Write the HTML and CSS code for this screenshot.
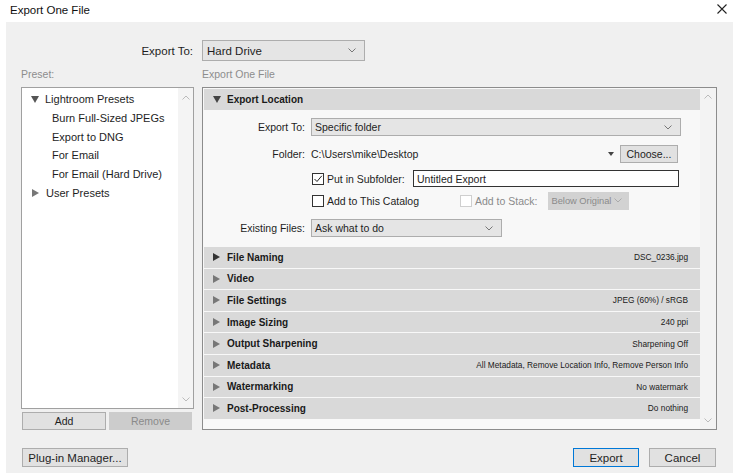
FILE: index.html
```html
<!DOCTYPE html>
<html>
<head>
<meta charset="utf-8">
<link rel="stylesheet" href="styles.css">
</head>
<body>
<div class="window">
  <div class="titlebar">
    <span class="title">Export One File</span>
    <svg class="close" width="10" height="10" viewBox="0 0 10 10"><path d="M0.5 0.5 L9.5 9.5 M9.5 0.5 L0.5 9.5" stroke="#222" stroke-width="1.1" fill="none"/></svg>
  </div>
  <div class="dialog">
    <div class="topline">
      <span class="toplabel">Export To:</span>
      <div class="select topselect"><span>Hard Drive</span><svg class="chev" width="8" height="5" viewBox="0 0 8 5"><path d="M0.5 0.5 L4 4 L7.5 0.5" stroke="#777" fill="none"/></svg></div>
    </div>
    <div class="caps">
      <span class="cap cap-left">Preset:</span>
      <span class="cap">Export One File</span>
    </div>
    <div class="columns">
      <div class="leftcol">
        <div class="list">
          <div class="tree">
            <div class="node"><span class="tri-d"></span>Lightroom Presets</div>
            <div class="leaf">Burn Full-Sized JPEGs</div>
            <div class="leaf">Export to DNG</div>
            <div class="leaf">For Email</div>
            <div class="leaf">For Email (Hard Drive)</div>
            <div class="node"><span class="tri-r"></span>User Presets</div>
          </div>
          <div class="vscroll">
            <svg width="8" height="5" viewBox="0 0 8 5"><path d="M0.5 4.5 L4 1 L7.5 4.5" stroke="#bbb" fill="none"/></svg>
            <svg width="8" height="5" viewBox="0 0 8 5"><path d="M0.5 0.5 L4 4 L7.5 0.5" stroke="#bbb" fill="none"/></svg>
          </div>
        </div>
        <div class="listbtns">
          <div class="btn small">Add</div>
          <div class="btn small disabled">Remove</div>
        </div>
      </div>
      <div class="panel">
        <div class="panelcontent">
          <div class="sechead open"><span class="tri-d dark"></span>Export Location</div>
          <div class="form">
            <div class="frow r1">
              <span class="flabel">Export To:</span>
              <div class="select sel-wide"><span>Specific folder</span><svg class="chev" width="8" height="5" viewBox="0 0 8 5"><path d="M0.5 0.5 L4 4 L7.5 0.5" stroke="#777" fill="none"/></svg></div>
            </div>
            <div class="frow r2">
              <span class="flabel">Folder:</span>
              <span class="path">C:\Users\mike\Desktop</span>
              <span class="tri-small"></span>
              <div class="btn choose">Choose...</div>
            </div>
            <div class="frow r3">
              <span class="flabel"></span>
              <div class="check checked"><svg width="10" height="10" viewBox="0 0 10 10"><path d="M1.5 5 L4 7.5 L8.8 1.8" stroke="#222" stroke-width="1" fill="none"/></svg></div>
              <span class="clabel sub">Put in Subfolder:</span>
              <div class="textbox">Untitled Export</div>
            </div>
            <div class="frow r4">
              <span class="flabel"></span>
              <div class="check"></div>
              <span class="clabel catalog">Add to This Catalog</span>
              <div class="check disabled"></div>
              <span class="clabel stacklbl">Add to Stack:</span>
              <div class="select sel-dis"><span>Below Original</span><svg class="chev" width="8" height="5" viewBox="0 0 8 5"><path d="M0.5 0.5 L4 4 L7.5 0.5" stroke="#aaa" fill="none"/></svg></div>
            </div>
            <div class="frow r5">
              <span class="flabel">Existing Files:</span>
              <div class="select sel-mid"><span>Ask what to do</span><svg class="chev" width="8" height="5" viewBox="0 0 8 5"><path d="M0.5 0.5 L4 4 L7.5 0.5" stroke="#777" fill="none"/></svg></div>
            </div>
          </div>
          <div class="sections">
            <div class="sechead"><span class="tri-r dark"></span><span class="stitle">File Naming</span><span class="sval">DSC_0236.jpg</span></div>
            <div class="sechead"><span class="tri-r"></span><span class="stitle">Video</span><span class="sval"></span></div>
            <div class="sechead"><span class="tri-r"></span><span class="stitle">File Settings</span><span class="sval">JPEG (60%) / sRGB</span></div>
            <div class="sechead"><span class="tri-r"></span><span class="stitle">Image Sizing</span><span class="sval">240 ppi</span></div>
            <div class="sechead"><span class="tri-r"></span><span class="stitle">Output Sharpening</span><span class="sval">Sharpening Off</span></div>
            <div class="sechead"><span class="tri-r"></span><span class="stitle">Metadata</span><span class="sval">All Metadata, Remove Location Info, Remove Person Info</span></div>
            <div class="sechead"><span class="tri-r"></span><span class="stitle">Watermarking</span><span class="sval">No watermark</span></div>
            <div class="sechead"><span class="tri-r"></span><span class="stitle">Post-Processing</span><span class="sval">Do nothing</span></div>
          </div>
        </div>
        <div class="vscroll pscroll">
          <svg width="8" height="5" viewBox="0 0 8 5"><path d="M0.5 4.5 L4 1 L7.5 4.5" stroke="#bbb" fill="none"/></svg>
          <svg width="8" height="5" viewBox="0 0 8 5"><path d="M0.5 0.5 L4 4 L7.5 0.5" stroke="#bbb" fill="none"/></svg>
        </div>
      </div>
    </div>
    <div class="footer">
      <div class="btn foot plugin">Plug-in Manager...</div>
      <div class="spacer"></div>
      <div class="btn foot primary">Export</div>
      <div class="btn foot cancel">Cancel</div>
    </div>
  </div>
</div>
</body>
</html>
```

FILE: styles.css
```css
html, body {
  margin: 0;
  padding: 0;
  background: #ffffff;
}
body {
  font-family: "Liberation Sans", Arial, sans-serif;
  font-size: 11px;
  color: #1e1e1e;
}
.window {
  width: 739px;
  height: 473px;
  display: flex;
  flex-direction: column;
  overflow: hidden;
}
.titlebar {
  height: 22px;
  flex: none;
  display: flex;
  align-items: center;
  padding: 0 12px 0 10px;
  background: #ffffff;
}
.title {
  font-size: 11.5px;
  color: #111;
  flex: 1;
  margin-top: -2px;
}
.close {
  margin-top: -4px;
}
.dialog {
  flex: 1;
  margin: 0 6px;
  background: #f0f0f0;
  padding: 0 16px 0 15px;
  display: flex;
  flex-direction: column;
}
.topline {
  margin-top: 18px;
  height: 21px;
  display: flex;
  align-items: center;
}
.toplabel {
  width: 172px;
  text-align: right;
  font-size: 11.5px;
  margin-right: 9px;
}
.select {
  box-sizing: border-box;
  display: flex;
  align-items: center;
  justify-content: space-between;
  background: #e5e5e5;
  border: 1px solid #adadad;
  padding: 0 8px 0 3px;
  color: #1e1e1e;
  white-space: nowrap;
}
.topselect {
  width: 163px;
  height: 21px;
  font-size: 11.5px;
  padding-left: 4px;
}
.caps {
  display: flex;
  height: 26px;
  align-items: center;
}
.cap {
  color: #8d8d8d;
  font-size: 10.5px;
}
.cap-left {
  width: 181px;
}
.columns {
  display: flex;
  gap: 8px;
  height: 343px;
}
.leftcol {
  width: 173px;
  display: flex;
  flex-direction: column;
}
.list {
  box-sizing: border-box;
  height: 322px;
  border: 1px solid #a0a0a0;
  background: #ffffff;
  display: flex;
}
.tree {
  flex: 1;
  padding-top: 2px;
}
.node, .leaf {
  height: 18.8px;
  line-height: 18.8px;
  white-space: nowrap;
}
.node {
  padding-left: 9px;
  display: flex;
  align-items: center;
}
.leaf {
  padding-left: 30px;
}
.tri-d {
  display: inline-block;
  width: 0;
  height: 0;
  border-left: 4px solid transparent;
  border-right: 4px solid transparent;
  border-top: 7px solid #555;
  margin-right: 6px;
}
.tri-r {
  display: inline-block;
  width: 0;
  height: 0;
  border-top: 4px solid transparent;
  border-bottom: 4px solid transparent;
  border-left: 7px solid #777;
  margin-right: 7px;
  margin-left: 1px;
}
.vscroll {
  width: 15px;
  background: #f4f4f4;
  display: flex;
  flex-direction: column;
  align-items: center;
  justify-content: space-between;
  padding: 7px 0 6px;
}
.listbtns {
  display: flex;
  gap: 3px;
  margin-top: 3px;
  padding-left: 1px;
}
.btn {
  box-sizing: border-box;
  display: flex;
  align-items: center;
  justify-content: center;
  background: #e1e1e1;
  border: 1px solid #adadad;
  color: #1e1e1e;
  white-space: nowrap;
}
.small {
  width: 84px;
  height: 18px;
  font-size: 10.5px;
}
.small.disabled {
  background: #cccccc;
  border-color: #cccccc;
  color: #8a8a8a;
  width: 83px;
}
.panel {
  flex: 1;
  box-sizing: border-box;
  height: 343px;
  border: 1px solid #8c8c8c;
  background: #f8f8f8;
  display: flex;
}
.panelcontent {
  flex: 1;
  padding: 1px 0 0 1px;
}
.pscroll {
  width: 16px;
  background: #f3f3f3;
  padding: 6px 0 6px;
}
.sechead {
  height: 21px;
  background: #d9d9d9;
  display: flex;
  align-items: center;
  padding: 0 12px 0 8px;
  font-weight: bold;
  font-size: 10px;
  color: #1a1a1a;
  white-space: nowrap;
}
.tri-d.dark {
  border-top-color: #444;
  margin-right: 6px;
  margin-left: 1px;
}
.tri-r.dark {
  border-left-color: #333;
}
.stitle {
  flex: 1;
}
.sval {
  font-weight: normal;
  font-size: 8.3px;
  color: #1a1a1a;
}
.form {
  display: flex;
  flex-direction: column;
  padding-top: 8px;
}
.frow {
  display: flex;
  align-items: center;
}
.flabel {
  width: 101px;
  text-align: right;
  margin-right: 6px;
  flex: none;
  font-size: 10.5px;
}
.r1 { height: 18px; }
.r2 { height: 18px; margin-top: 9px; }
.r3 { height: 17px; margin-top: 7px; }
.r4 { height: 17px; margin-top: 5px; }
.r5 { height: 18px; margin-top: 10px; }
.sel-wide {
  width: 370px;
  height: 18px;
  font-size: 10.5px;
}
.sel-mid {
  width: 191px;
  height: 18px;
  font-size: 10.5px;
}
.sel-dis {
  width: 81px;
  height: 18px;
  background: #d2d2d2;
  border-color: #d2d2d2;
  color: #8a8a8a;
  font-size: 9.3px;
  margin-left: 11px;
  padding: 0 6px 0 2px;
}
.path {
  font-size: 10.5px;
  flex: none;
  width: 297px;
}
.tri-small {
  width: 0;
  height: 0;
  border-left: 3px solid transparent;
  border-right: 3px solid transparent;
  border-top: 4px solid #444;
  margin-right: 6px;
}
.choose {
  width: 58px;
  height: 18px;
  font-size: 10.5px;
}
.check {
  box-sizing: border-box;
  width: 12px;
  height: 12px;
  border: 1px solid #333;
  background: #fff;
  margin-left: 1px;
  display: flex;
  align-items: center;
  justify-content: center;
  flex: none;
}
.check.disabled {
  border-color: #cfcfcf;
  margin-left: 0;
}
.clabel {
  font-size: 10.5px;
  margin-left: 3px;
  white-space: nowrap;
}
.sub {
  width: 86px;
}
.catalog {
  width: 133px;
}
.stacklbl {
  color: #8a8a8a;
}
.textbox {
  box-sizing: border-box;
  width: 266px;
  height: 17px;
  border: 1px solid #333;
  background: #fff;
  font-size: 10.5px;
  padding-left: 3px;
  display: flex;
  align-items: center;
}
.sections {
  margin-top: 10px;
  display: flex;
  flex-direction: column;
  gap: 1px;
}
.sections .sechead {
  height: 20.6px;
}
.footer {
  display: flex;
  align-items: center;
  margin-top: 18px;
  padding-left: 1px;
}
.spacer { flex: 1; }
.foot {
  height: 19px;
  font-size: 11.5px;
}
.plugin { width: 106px; }
.primary {
  width: 66px;
  border: 1px solid #0078d7;
  margin-right: 10px;
}
.cancel {
  width: 67px;
  margin-right: 1px;
}
```
